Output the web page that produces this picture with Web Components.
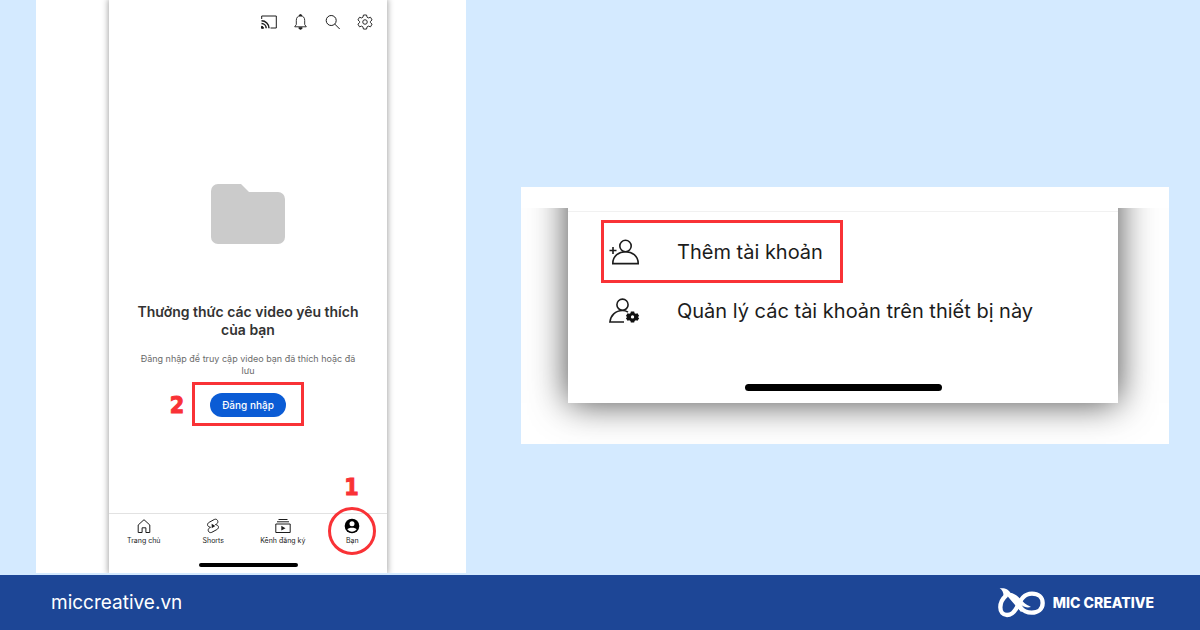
<!DOCTYPE html>
<html lang="vi">
<head>
<meta charset="utf-8">
<meta name="viewport" content="width=device-width, initial-scale=1">
<title>MIC Creative</title>
<style>
  body { margin: 0; font-family: Inter, "Liberation Sans", sans-serif; --red: #f93236; --ink: #1c1c1c; }
</style>
</head>
<body>
<guide-page>
  <phone-screen></phone-screen>
  <account-sheet></account-sheet>
  <brand-footer slot="footer"></brand-footer>
</guide-page>

<script>
const define = (name, html) => {
  const template = document.createElement('template');
  template.innerHTML = html;
  customElements.define(name, class extends HTMLElement {
    constructor() {
      super();
      this.attachShadow({ mode: 'open' }).append(template.content.cloneNode(true));
    }
  });
};

define('guide-page', `
  <style>
    :host { display: flex; flex-direction: column; min-height: 100vh; background: #d4eaff; }
    main { flex: 1; display: grid; grid-template-columns: minmax(0, 430fr) minmax(0, 648fr);
           column-gap: 55px; padding: 0 31px 2px 36px; }
  </style>
  <main><slot></slot></main>
  <slot name="footer"></slot>`);

define('home-indicator', `
  <style>
    :host { display: block; background: #000; border-radius: 4px; margin: 0 auto; }
  </style>`);

define('nav-tab', `
  <style>
    :host { flex: 1; display: block; position: relative; }
    a { display: flex; flex-direction: column; align-items: center; gap: 2px; color: var(--ink);
        font-size: 7px; line-height: 10px; text-decoration: none; white-space: nowrap; }
    ::slotted(svg) { width: 16px; height: 16px; display: block; }
  </style>
  <a href="#"><slot name="icon"></slot><slot></slot></a>
  <slot name="mark"></slot>`);

define('phone-screen', `
  <style>
    :host { display: block; background: #fff; overflow: hidden; padding: 0 79px 0 73px; }
    .phone { display: flex; flex-direction: column; height: 100%; background: #fff;
             box-shadow: 0 0 6px 1px rgba(0,0,0,.34); }
    header { display: flex; justify-content: flex-end; gap: 16px; padding: 14px 14px 0; }
    header button { border: 0; padding: 0; background: none; width: 16px; height: 16px; color: var(--ink); }
    header svg { display: block; width: 16px; height: 16px; overflow: visible; }
    svg { fill: none; stroke: currentColor; }
    .folder { width: 74px; height: 60px; margin: 154px auto 0; fill: #cbcbcb; stroke: none; }
    h1 { margin: 59px 0 0; font-size: 14px; line-height: 18px; font-weight: 600; color: #333; text-align: center; padding: 0 24px; }
    p { margin: 14px 0 0; font-size: 9px; line-height: 12px; color: #6b6b6b; text-align: center; padding: 0 24px; }
    .frame { position: relative; align-self: center; margin-top: 5px; padding: 8px 15px; border: 3px solid var(--red); }
    .frame button { display: block; height: 24px; border: 0; border-radius: 12px; padding: 0 12px; margin-bottom: -2px;
                    background: #0b5cd5; color: #fff; font: 500 10px/24px Inter, sans-serif; }
    .step { position: absolute; color: var(--red); font: 700 23px/24px "DejaVu Sans Condensed", "DejaVu Sans", sans-serif; -webkit-text-stroke: 1px var(--red); }
    .two { right: 100%; top: 8px; margin-right: 11px; }
    nav { margin-top: auto; border-top: 1px solid #e2e2e2; display: flex; padding: 4px 0 17px; color: var(--ink); }
    .ring { position: absolute; left: 50%; top: -11px; width: 42px; height: 42px; margin-left: -24px;
            border: 3px solid var(--red); border-radius: 50%; pointer-events: none; }
    .one { left: 50%; top: -43px; margin-left: -8px; }
    home-indicator { width: 99px; height: 4px; margin-bottom: 6px; }
  </style>
  <div class="phone">
    <header>
      <button aria-label="Truyền"><svg viewBox="0 0 16 16"><path d="M.7 5V2h14.6v12H9.5"/><path stroke-width="1.5" d="M.5 6.8a7.5 7.5 0 0 1 7.5 7.5M.5 9.6a4.7 4.7 0 0 1 4.7 4.7"/><path fill="currentColor" d="M.5 12.3a2 2 0 0 1 2 2h-2z"/></svg></button>
      <button aria-label="Thông báo"><svg viewBox="0 0 16 16"><path stroke-width=".9" d="M1.7 12.8h11.6l-1.6-2.3V6.4c0-2.7-1.5-4.6-4.2-4.6S3.300 3.700 3.300 6.400v4.100z"/><path fill="currentColor" d="M6.300 1.800a1.200 1.200 0 0 1 2.400 0zM5.800 13.800h3.400q-.4 1.500-1.700 1.500t-1.700-1.500z"/></svg></button>
      <button aria-label="Tìm kiếm"><svg viewBox="0 0 16 16"><circle cx="6.200" cy="6.500" r="5"/><path d="m9.800 10.100 4.900 4.900"/></svg></button>
      <button aria-label="Cài đặt"><svg viewBox="0 0 24 24"><g stroke-width="1.400"><circle cx="12" cy="12" r="3.400"/><path d="M9.700 1.500h4.600l.8 3.300 1.900 1.100 3.300-1 2.300 4-2.500 2.300v1.700l2.500 2.300-2.300 4-3.300-1-1.900 1.100-.8 3.300H9.700l-.8-3.300L7 18.200l-3.300 1-2.300-4 2.500-2.300v-1.700L1.400 8.900l2.300-4 3.300 1 1.900-1.100z" stroke-linejoin="round"/></g></svg></button>
    </header>
    <svg class="folder" viewBox="0 0 74 60"><path d="M7 0h23l8 8h29a7 7 0 0 1 7 7v38a7 7 0 0 1-7 7H7a7 7 0 0 1-7-7V7a7 7 0 0 1 7-7z"/></svg>
    <h1>Thưởng thức các video yêu thích của bạn</h1>
    <p>Đăng nhập để truy cập video bạn đã thích hoặc đã lưu</p>
    <div class="frame"><span class="step two">2</span><button>Đăng nhập</button></div>
    <nav>
      <nav-tab><svg slot="icon" viewBox="0 0 16 16"><path d="M2.200 7 8 1.700 13.800 7v7.500H9.900V9.800H6.100v4.700H2.200z" stroke-linejoin="round"/></svg>Trang chủ</nav-tab>
      <nav-tab><svg slot="icon" viewBox="0 0 24 24"><path stroke-width="1.500" d="m14 2.200-7.800 4.300c-3.600 2-3 6.200.8 7l1.300.5-1.400.7c-4.300 2.500-1.500 8.900 3.300 6.800l7.600-4.200c3.600-2 3-6.200-.8-7l-1.300-.5 1.600-.8c4.200-2.500 1.200-8.900-3.300-6.800z"/><path fill="currentColor" stroke="none" d="m10 8.800 5.500 3.200-5.500 3.200z"/></svg>Shorts</nav-tab>
      <nav-tab><svg slot="icon" viewBox="0 0 16 16"><path d="M3.500 1.500h9M2 3.800h12M.8 6h14.400v8.500H.8z"/><path fill="currentColor" stroke="none" d="m6.300 7.800 4.200 2.400-4.200 2.400z"/></svg>Kênh đăng ký</nav-tab>
      <nav-tab><svg slot="icon" viewBox="0 0 16 16"><circle cx="8" cy="8" r="7.300" fill="#000" stroke="none"/><circle cx="8" cy="5.700" r="2.500" fill="#fff" stroke="none"/><path fill="#fff" stroke="none" d="M3.300 11.300c1-2.200 8.400-2.200 9.400 0-2.200 3.200-7.200 3.200-9.400 0z"/></svg>Bạn<span slot="mark" class="ring"></span><span slot="mark" class="step one">1</span></nav-tab>
    </nav>
    <home-indicator></home-indicator>
  </div>`);

define('sheet-row', `
  <style>
    :host { display: flex; }
    a { display: flex; align-items: center; gap: 36px; height: 57px; padding: 0 17px 0 5px; border: 3px solid transparent;
        color: var(--ink); font-size: 20px; line-height: 28px; text-decoration: none; white-space: nowrap; }
    :host([marked]) a { border-color: var(--red); }
    ::slotted(svg) { width: 32px; height: 32px; display: block; }
  </style>
  <a href="#"><slot name="icon"></slot><slot></slot></a>`);

define('account-sheet', `
  <style>
    :host { display: block; align-self: center; background: #fff; padding-top: 21px; margin-top: 58px; }
    .clip { overflow: hidden; padding: 0 51px 41px 47px; }
    /* The sheet runs on above the visible area, so its side shadows are cut off straight. */
    .sheet { margin-top: -40px; padding-top: 43px; background: #fff; box-shadow: 0 0 34px rgba(0,0,0,.72); }
    .list { border-top: 1px solid #f1f1f1; padding: 8px 33px 0; }
    sheet-row + sheet-row { margin-top: -4px; }
    svg { fill: none; stroke: var(--ink); stroke-width: 1.600; }
    home-indicator { width: 197px; height: 7px; margin-top: 42px; }
    .foot { padding-bottom: 12px; }
  </style>
  <div class="clip"><div class="sheet">
    <div class="list">
      <sheet-row marked><svg slot="icon" viewBox="0 0 32 32"><circle cx="16.500" cy="10" r="5.700"/><path d="M3.800 27.600c0-15.800 25.400-15.800 25.400 0zM.5 14.500h7M4 11v7"/></svg>Thêm tài khoản</sheet-row>
      <sheet-row><svg slot="icon" viewBox="0 0 32 32"><circle cx="13.500" cy="9.700" r="5.600"/><path d="M15 27H.9c.6-6.500 5.500-11.500 12.600-11.500 2.200 0 3.900.6 5.500 1.600"/><path transform="translate(3.600 3.800) scale(.83)" fill="#111" fill-rule="evenodd" stroke="none" d="M22 15.300h4l.5 2 1.500.8 2-.6 2 3.200-1.600 1.300 1.600 1.300-2 3.200-2-.6-1.500.8-.5 2h-4l-.5-2-1.500-.8-2 .6-2-3.200 1.600-1.300-1.600-1.300 2-3.200 2 .6 1.500-.8zm2 4.500a2 2 0 1 0 0 4 2 2 0 0 0 0-4z"/></svg>Quản lý các tài khoản trên thiết bị này</sheet-row>
    </div>
    <div class="foot"><home-indicator></home-indicator></div>
  </div></div>`);

define('brand-footer', `
  <style>
    :host { display: flex; align-items: center; justify-content: space-between; height: 55px; padding: 0 46px 0 51px;
            box-sizing: border-box; background: #1d4696; color: #fff; }
    a { color: inherit; text-decoration: none; font-size: 19px; line-height: 24px; }
    .brand { display: flex; align-items: center; gap: 8px; font-size: 14px; font-weight: 800; line-height: 20px; }
    svg { width: 47px; height: 30px; }
  </style>
  <a href="#">miccreative.vn</a>
  <div class="brand">
    <svg viewBox="0 0 141 90" fill="none" stroke="#fff" stroke-width="13" aria-hidden="true">
      <path d="M25 22C13 32 7 44 7 58c0 14 8 23 20 23 14 0 22-9 29-22 12-23 21-42 46-42 19 0 32 11 32 28 0 18-14 29-33 29-14 0-25-5-35-16"/>
      <path fill="#fff" stroke="none" d="M5 1c18-2 27 5 32 13 9 2 17 6 24 13l18 18c7 6 13 8 20 12-10 3-20 1-28-5l8 11-10 9L30 26l-14 2C18 16 14 7 5 1z"/>
    </svg>
    <span>MIC CREATIVE</span>
  </div>`);
</script>
</body>
</html>
